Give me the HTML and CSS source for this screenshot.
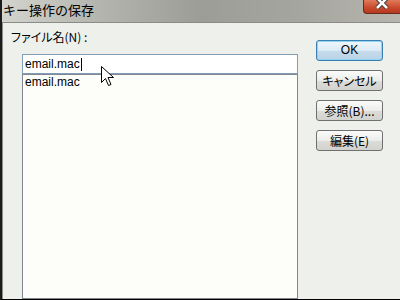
FILE: index.html
```html
<!DOCTYPE html>
<html lang="ja">
<head>
    <meta charset="UTF-8">
    <title>キー操作の保存</title>
    <link rel="stylesheet" href="styles.css">
</head>
<body>
    <div class="window">
        <div class="titlebar">
            <span class="title">キー操作の保存</span>
            <div class="close">
                <svg width="14" height="10" viewBox="0 0 14 10">
                    <path d="M2 -2 L12 8 M12 -2 L2 8" stroke="#3a3a3a" stroke-width="4.5" fill="none"/>
                    <path d="M2 -2 L12 8 M12 -2 L2 8" stroke="#fff" stroke-width="2.5" fill="none"/>
                </svg>
            </div>
        </div>
        <div class="client">
            <div class="main">
                <div class="label">ファイル名(N) :</div>
                <div class="fields">
                    <div class="input">email.mac<span class="caret"></span></div>
                    <div class="list">
                        <div class="item">email.mac</div>
                    </div>
                </div>
            </div>
            <div class="buttons">
                <div class="btn default">OK</div>
                <div class="btn">キャンセル</div>
                <div class="btn">参照(B)...</div>
                <div class="btn">編集(E)</div>
            </div>
        </div>
    </div>
    <svg class="pointer" width="14" height="22" viewBox="0 0 14 22">
        <path d="M0.5 0.5 L0.5 16.5 L4.5 12.5 L7.5 19.5 L10 18.5 L7 11.5 L12.5 11.5 Z" fill="#fff" stroke="#000" stroke-width="1"/>
    </svg>
</body>
</html>
```

FILE: styles.css
```css
body {
    margin: 0;
    width: 400px;
    height: 300px;
    overflow: hidden;
    font-family: "Liberation Sans", "Noto Sans CJK JP", sans-serif;
    font-size: 12px;
    color: #000;
}

.window {
    width: 400px;
    height: 300px;
    box-sizing: border-box;
    display: flex;
    flex-direction: column;
    border-left: 2px solid #1c1c1c;
    border-bottom: 1px solid #000;
}

.titlebar {
    height: 22px;
    flex-shrink: 0;
    display: flex;
    justify-content: space-between;
    background: linear-gradient(to right, #d4d4ce 0%, #b4b4ae 25%, #9d9d98 50%, #a6a6a0 75%, #b6b6ae 100%);
}

.title {
    font-family: "Noto Sans CJK JP", sans-serif;
    font-size: 13px;
    line-height: 20px;
    padding-left: 1px;
}

.close {
    width: 37px;
    height: 14px;
    box-sizing: border-box;
    border: 1px solid #6a2a1c;
    border-top: none;
    border-right: none;
    border-radius: 0 0 0 4px;
    background: linear-gradient(to bottom, #e07a5c, #c9482c 60%, #b23a20);
    display: flex;
    justify-content: center;
    align-items: flex-start;
}

.client {
    flex: 1;
    display: flex;
    min-height: 0;
    background-color: #eef0ec;
    border-top: 1px solid #8a8a86;
    border-left: 1px solid #8c8c88;
}

.main {
    padding: 6px 0 0 8px;
    display: flex;
    flex-direction: column;
}

.label {
    font-family: "Noto Sans CJK JP", sans-serif;
    font-feature-settings: "palt";
    line-height: 15px;
    height: 15px;
}

.fields {
    flex: 1;
    margin: 10px 0 0 11px;
    width: 276px;
    display: flex;
    flex-direction: column;
}

.input {
    height: 20px;
    box-sizing: border-box;
    border: 1px solid #7f9db9;
    background-color: #fff;
    padding: 0 2px;
    line-height: 18px;
    display: flex;
    align-items: center;
}

.caret {
    width: 1px;
    height: 13px;
    background-color: #000;
    margin-left: 1px;
}

.list {
    flex: 1;
    border: 1px solid #828790;
    background-color: #fdfdfa;
    padding: 0 2px;
}

.item {
    line-height: 14px;
}

.buttons {
    margin-left: 18px;
    padding-top: 17px;
    width: 67px;
    display: flex;
    flex-direction: column;
    gap: 9px;
}

.btn {
    height: 21px;
    box-sizing: border-box;
    border: 1px solid #707070;
    border-radius: 3px;
    background: linear-gradient(to bottom, #fbfbfa 0%, #ececea 50%, #dcdcd8 51%, #d2d2ce 100%);
    font-family: "Noto Sans CJK JP", sans-serif;
    font-feature-settings: "palt";
    text-align: center;
    line-height: 19px;
}

.btn.default {
    border-color: #3c7fb1;
    box-shadow: inset 0 0 0 1px #8fd4f2;
    background: linear-gradient(to bottom, #eef6fb 0%, #dcebf5 50%, #c6dcec 51%, #b8d2e6 100%);
    font-family: "Liberation Sans", sans-serif;
}

.pointer {
    position: absolute;
    left: 101px;
    top: 66px;
}
```
